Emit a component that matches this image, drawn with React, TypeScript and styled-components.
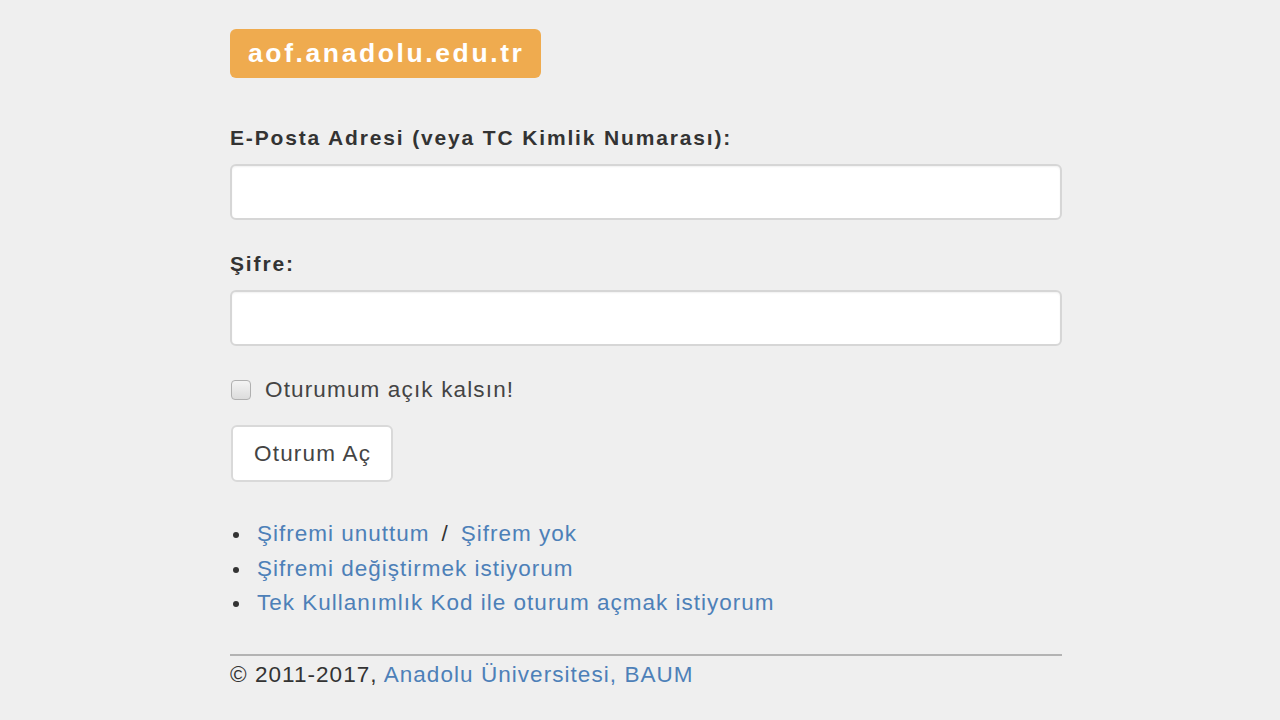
import React from "react";
import styled, { createGlobalStyle } from "styled-components";

const Global = createGlobalStyle`
  html, body { margin: 0; padding: 0; background: #efefef; }
  body { font-family: "Liberation Sans", Arial, sans-serif; color: #333; }
`;

const Page = styled.div`
  width: 832px;
  margin: 0 0 0 230px;
  padding-top: 29px;
  display: flex;
  flex-direction: column;
`;

const Brand = styled.div`
  align-self: flex-start;
  background: #efab4f;
  color: #fff;
  font-weight: bold;
  font-size: 26.5px;
  letter-spacing: 2.6px;
  line-height: 49px;
  height: 49px;
  padding: 0 17px 0 18px;
  border-radius: 6px;
`;

const Form = styled.form`
  display: flex;
  flex-direction: column;
  margin-top: 46px;
`;

const Group = styled.div`
  display: flex;
  flex-direction: column;
  margin-bottom: 30px;
`;

const Label = styled.label`
  font-weight: bold;
  font-size: 21px;
  letter-spacing: 1.85px;
  line-height: 28px;
  color: #333;
  margin-bottom: 12px;
`;

const Input = styled.input`
  box-sizing: border-box;
  height: 56px;
  width: 100%;
  border: 2px solid #d6d6d6;
  border-radius: 6px;
  background: #fff;
  box-shadow: inset 0 1px 2px rgba(0,0,0,0.06);
  font-size: 22px;
  padding: 0 18px;
  outline: none;
`;

const CheckRow = styled.label`
  display: flex;
  align-items: center;
  gap: 14px;
  font-size: 22.5px;
  letter-spacing: 1.15px;
  color: #444;
  height: 28px;
`;

const Box = styled.span`
  box-sizing: border-box;
  width: 20px;
  height: 20px;
  margin-left: 1px;
  border: 1px solid #b0b0b0;
  border-radius: 4px;
  background: linear-gradient(#f4f4f4, #dcdcdc);
`;

const Button = styled.button`
  align-self: flex-start;
  margin-top: 21px;
  margin-left: 1px;
  height: 57px;
  padding: 0 20px 0 21px;
  background: #fff;
  border: 2px solid #d9d9d9;
  border-radius: 6px;
  font-family: "Liberation Sans", Arial, sans-serif;
  font-size: 22.5px;
  letter-spacing: 1.2px;
  color: #444;
`;

const Links = styled.ul`
  margin: 35px 0 0 0;
  padding: 0;
  list-style: none;
  display: flex;
  flex-direction: column;
`;

const Item = styled.li`
  display: flex;
  align-items: center;
  height: 34.5px;
  font-size: 22.5px;
  letter-spacing: 1.0px;
  color: #333;
`;

const Dot = styled.span`
  width: 6px;
  height: 6px;
  border-radius: 50%;
  background: #333;
  margin: 2px 18px 0 3px;
  flex: none;
`;

const A = styled.a`
  color: #4d80b8;
  text-decoration: none;
`;

const Sep = styled.span`
  margin: 0 12px;
  color: #333;
`;

const Rule = styled.hr`
  width: 100%;
  margin: 33px 0 0;
  border: 0;
  border-top: 2px solid #b3b3b3;
`;

const Footer = styled.div`
  font-size: 22.5px;
  letter-spacing: 1.05px;
  line-height: 30px;
  margin-top: 4px;
  color: #333;
`;

export default function App() {
  return (
    <>
      <Global />
      <Page>
        <Brand>aof.anadolu.edu.tr</Brand>
        <Form onSubmit={(e) => e.preventDefault()}>
          <Group>
            <Label>E-Posta Adresi (veya TC Kimlik Numarası):</Label>
            <Input type="text" />
          </Group>
          <Group>
            <Label>Şifre:</Label>
            <Input type="password" />
          </Group>
          <CheckRow>
            <Box />
            Oturumum açık kalsın!
          </CheckRow>
          <Button type="submit">Oturum Aç</Button>
        </Form>
        <Links>
          <Item>
            <Dot />
            <A href="#">Şifremi unuttum</A>
            <Sep>/</Sep>
            <A href="#">Şifrem yok</A>
          </Item>
          <Item>
            <Dot />
            <A href="#">Şifremi değiştirmek istiyorum</A>
          </Item>
          <Item>
            <Dot />
            <A href="#">Tek Kullanımlık Kod ile oturum açmak istiyorum</A>
          </Item>
        </Links>
        <Rule />
        <Footer>
          © 2011-2017, <A href="#">Anadolu Üniversitesi, BAUM</A>
        </Footer>
      </Page>
    </>
  );
}
